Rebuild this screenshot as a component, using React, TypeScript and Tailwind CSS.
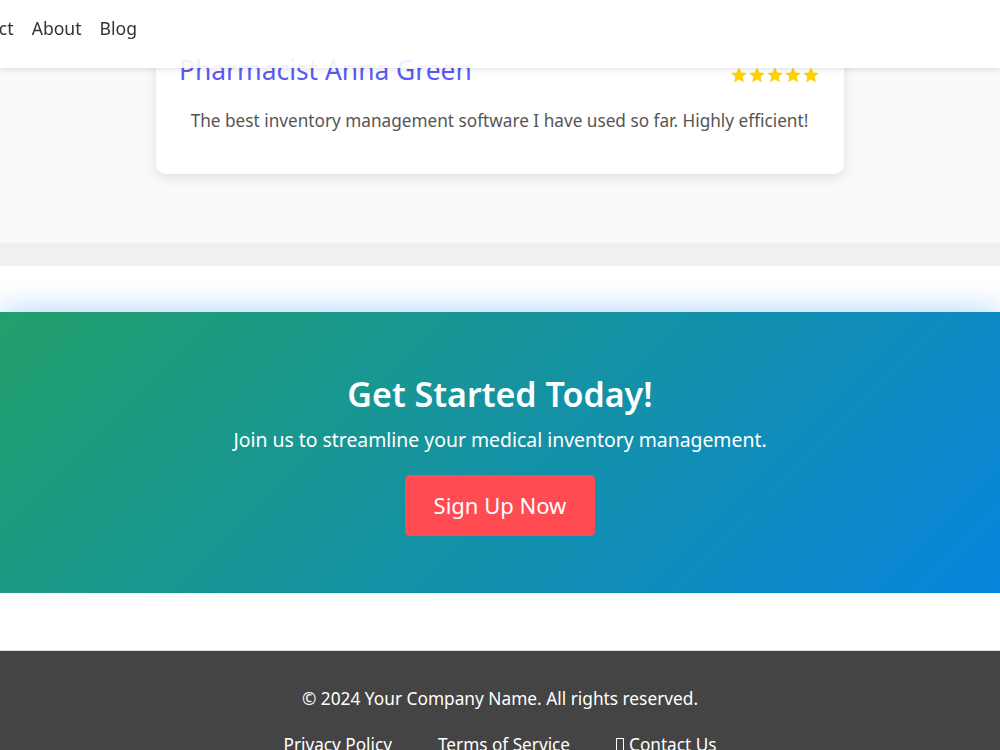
import React from "react";

const font = { fontFamily: '"Noto Sans", "Open Sans", sans-serif' };

function Stars() {
  return (
    <div className="flex items-center gap-[0px] text-[#ffd200]">
      {[0, 1, 2, 3, 4].map((i) => (
        <svg key={i} width="18" height="18" viewBox="0 0 24 24" fill="currentColor">
          <path d="M12 1.8l3.1 6.9 7.4.7-5.6 5 1.7 7.4L12 17.9l-6.6 3.9 1.7-7.4-5.6-5 7.4-.7z" />
        </svg>
      ))}
    </div>
  );
}

export default function App() {
  return (
    <div className="relative w-full bg-white text-[#333]" style={font}>
      {/* fixed top navigation */}
      <header className="fixed top-0 left-0 right-0 z-10 h-[68px] bg-white/90 shadow-[0_2px_5px_rgba(0,0,0,0.1)]">
        <nav className="flex h-[56px] items-center gap-[18px] -ml-[50px] text-[17.6px] text-[#333]">
          <a>Contact</a>
          <a>About</a>
          <a>Blog</a>
        </nav>
      </header>

      {/* testimonials */}
      <section className="bg-[#f9f9f9] pt-[28px] pb-[69px]">
        <div className="mx-auto w-[688px] rounded-[10px] bg-white pl-[23px] pr-[24px] pt-[24px] pb-[40px] shadow-[0_4px_12px_rgba(0,0,0,0.1)]">
          <div className="flex items-end justify-between">
            <h3 className="text-[26.4px] leading-[36px] text-[#5a5af5]">Pharmacist Anna Green</h3>
            <div className="mb-[4px]">
              <Stars />
            </div>
          </div>
          <p className="mt-[20px] text-center text-[17.2px] leading-[26px] text-[#555]">
            The best inventory management software I have used so far. Highly efficient!
          </p>
        </div>
      </section>
      <div className="h-[23px] bg-[#f0f0f0]" />
      <div className="h-[46px] bg-white" />

      {/* call to action */}
      <section className="flex h-[281px] flex-col items-center bg-[linear-gradient(135deg,#22a06b,#0784dc)] pt-[60px] text-white shadow-[0_0_30px_rgba(0,123,255,0.35)]">
        <h2 className="text-[34px] font-semibold leading-[44px]">Get Started Today!</h2>
        <p className="mt-[10px] text-[19.4px] leading-[28px]">
          Join us to streamline your medical inventory management.
        </p>
        <button className="mt-[21px] h-[61px] w-[190px] rounded-[5px] bg-[#ff4b51] text-[22px] text-white">
          Sign Up Now
        </button>
      </section>
      <div className="h-[57px] bg-white" />

      {/* footer */}
      <footer className="border-t border-[#ddd] bg-[#444] pt-[35px] pb-[20px] text-center text-white">
        <p className="text-[17.3px] leading-[26px]">© 2024 Your Company Name. All rights reserved.</p>
        <div className="mt-[20px] flex justify-center gap-[46px] text-[17.2px] leading-[26px]">
          <a>Privacy Policy</a>
          <a>Terms of Service</a>
          <a className="flex items-center gap-[5px]">
            <span className="inline-block h-[14px] w-[8px] border border-white" />
            Contact Us
          </a>
        </div>
      </footer>
    </div>
  );
}
